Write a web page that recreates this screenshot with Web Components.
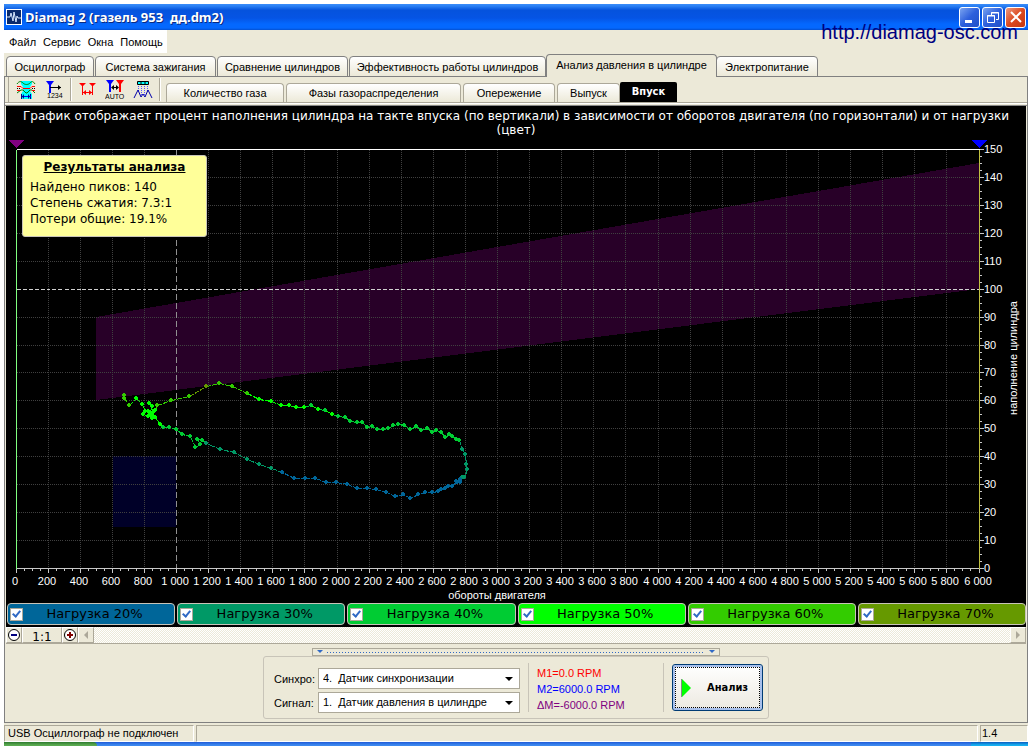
<!DOCTYPE html>
<html lang="ru">
<head>
<meta charset="utf-8">
<title>Diamag 2</title>
<style>
html, body { margin: 0; min-height: 100vh; background: #fff; }
body { font: 11px/14px "Liberation Sans", Arial, sans-serif; color: #000; }
</style>
</head>
<body>
<diamag-window></diamag-window>

<template id="diamag-window">
<style>
:host { display: flex; flex-direction: column; min-height: 100vh; box-sizing: border-box; padding: 4px 4px 0; position: relative;
  --face: #ece9d8; --shade: #aca899; --frame: #808080; }
.body { flex: 1; display: flex; flex-direction: column; background: var(--face); }
.page { flex: 1; display: flex; flex-direction: column; border: 1px solid var(--frame); border-top: 0; }
.link { position: absolute; right: 14px; top: 20px; font-size: 20px; line-height: 24px; color: #000080; text-decoration: none; }
.tools { display: flex; align-items: flex-end; height: 26px; box-sizing: border-box; border-bottom: 1px solid var(--shade); padding-left: 3px; }
.strip { height: 3px; box-sizing: border-box; border-top: 1px solid #fff; border-bottom: 1px solid #888; }
intake-chart { flex: 1 1 0; min-height: 360px; }
</style>
<title-bar>Diamag 2 (газель 953&nbsp; дд.dm2)</title-bar>
<a class="link" href="#">http://diamag-osc.com</a>
<div class="body">
  <menu-bar></menu-bar>
  <main-tabs></main-tabs>
  <div class="page">
    <div class="tools"><tool-icons></tool-icons><sub-tabs></sub-tabs></div>
    <div class="strip"></div>
    <intake-chart>График отображает процент наполнения цилиндра на такте впуска (по вертикали) в зависимости от оборотов двигателя (по горизонтали) и от нагрузки (цвет)</intake-chart>
    <load-legend></load-legend>
    <zoom-scroll></zoom-scroll>
    <analysis-panel></analysis-panel>
  </div>
  <status-bar></status-bar>
</div>
<task-edge></task-edge>
</template>

<template id="title-bar">
<style>
:host { display: flex; align-items: center; height: 26px; padding: 0 2px; color: #fff; font: bold 13px/18px "Noto Sans", sans-serif; text-shadow: 1px 1px #0a2a80;
  background: linear-gradient(#3b8cf8 0, #2a80f4 2px, #0553dd 6px, #0554e4 14px, #0468fe 20px, #0468fe 24px, #0450d0 26px); }
.name { flex: 1; white-space: nowrap; padding-left: 3px; }
.logo { display: block; }
button { width: 21px; height: 21px; margin: 0 0 0 2px; padding: 0; border: 1px solid #fff; border-radius: 3px; background: linear-gradient(135deg, #7ba4f0, #2d5fdc 50%, #2050c8); display: grid; place-items: center; }
button.close { background: linear-gradient(135deg, #ee9a80, #dc4a20 50%, #c43810); }
svg { display: block; }
</style>
<svg class="logo" width="16" height="16"><rect x=".5" y=".5" width="15" height="15" fill="#0a2a6c" stroke="#fff"/><path d="M1 8h3l1-4 2 8 1-9 2 10 1-6 1 2h3" fill="none" stroke="#d8e8ff"/></svg>
<span class="name"><slot></slot></span>
<button aria-label="Свернуть"><svg width="16" height="16"><path d="M3 11h7v3H3z" fill="#fff"/></svg></button>
<button aria-label="Восстановить"><svg width="16" height="16" fill="none" stroke="#fff"><path d="M6.500 6V3.500h7v7H11M6 4h8"/><path d="M2.500 6.500h7v7h-7zM2 7h8"/></svg></button>
<button class="close" aria-label="Закрыть"><svg width="16" height="16"><path d="M3 3l10 10M13 3L3 13" stroke="#fff" stroke-width="2"/></svg></button>
</template>

<template id="menu-bar">
<style>
:host { display: flex; height: 23px; }
nav { background: #fff; display: flex; align-items: center; gap: 7px; padding: 0 4px 0 5px; }
button { border: 0; padding: 0; background: none; font: inherit; color: inherit; }
</style>
<nav><button>Файл</button><button>Сервис</button><button>Окна</button><button>Помощь</button></nav>
</template>

<template id="main-tabs">
<style>
:host { display: flex; align-items: flex-end; height: 24px; box-sizing: border-box; padding-left: 2px; box-shadow: inset 0 -1px #808080; }
button { flex: none; height: 21px; margin: 0 1px 0 0; padding: 0; border: 1px solid #808080; border-radius: 4px 4px 0 0; background: linear-gradient(#fff, #ece9d8); font: inherit; color: inherit; white-space: nowrap; }
button.on { height: 23px; margin: 0 -1px; padding-bottom: 2px; border-bottom: 0; background: #ece9d8; }
.a { width: 88px } .b { width: 121px } .c { width: 131px } .d { width: 197px } .e { width: 171px } .f { width: 102px }
</style>
<button class="a">Осциллограф</button><button class="b">Система зажигания</button><button class="c">Сравнение цилиндров</button><button class="d">Эффективность работы цилиндров</button><button class="e on">Анализ давления в цилиндре</button><button class="f">Электропитание</button>
</template>

<template id="sub-tabs">
<style>
:host { display: flex; align-items: flex-end; padding-left: 2px; }
button { flex: none; height: 19px; margin: 0 2px 0 0; padding: 0; border: 1px solid #aca899; border-bottom: 0; border-radius: 4px 4px 0 0; background: linear-gradient(#fff, #ece9d8); font: inherit; color: inherit; white-space: nowrap; }
button.on { height: 20px; margin-left: -2px; border: 0; border-radius: 2px 2px 0 0; background: #000; color: #fff; font: bold 11px/14px "DejaVu Sans Condensed", sans-serif; }
.a { width: 118px } .b { width: 175px } .c { width: 92px } .d { width: 63px } .e { width: 57px }
</style>
<button class="a">Количество газа</button><button class="b">Фазы газораспределения</button><button class="c">Опережение</button><button class="d">Выпуск</button><button class="e on">Впуск</button>
</template>

<template id="tool-icons">
<style>
:host { display: flex; align-items: center; height: 25px; border-left: 1px solid #aca899; }
button { border: 0; padding: 0; margin: 0 4px 0 0; background: none; width: 24px; height: 22px; }
i { width: 1px; height: 23px; background: #aca899; border-right: 1px solid #fff; margin-right: 3px; }
svg { display: block; margin: auto; }
text { font: 7px "Liberation Sans", sans-serif; }
.first { margin-left: 5px; }
</style>
<button class="first" aria-label="Осциллограмма"><svg width="20" height="20" fill="none"><path d="M5 1h11v3l-2 3v4l2 3v5H5v-5l2-3V7L5 4z" fill="#0ff"/><path d="M1 4c2-3 4-3 6-1s5 2 7 0 3-2 5 1M1 13l4-3h2l3 3h1l3-3h2l3 3" stroke="#008000"/><path d="M1 6.500h4l2 2h7l2-2h3M1 10.500h3M16 10.500h3" stroke="#f00"/><path d="M1 8.500h4M16 8.500h3" stroke="#000" stroke-dasharray="1 1"/><path d="M5.500 14v5M14.500 14v5" stroke="#008"/><path d="M6 16.500h9" stroke="#00f"/><path d="M8 14v5l-2-2.500zM12 14v5l2-2.500z" fill="#008"/></svg></button>
<button aria-label="Нумерация"><svg width="20" height="20"><path d="M2 1h8L7 5v8H5V5z" fill="#00f"/><path d="M6 7.500h11" stroke="#000"/><path d="M14 5l3 2.500-3 2.500z"/><text x="3" y="18">1234</text></svg></button>
<i></i>
<button aria-label="Маркеры"><svg width="20" height="20" fill="#f00"><path d="M2 3h7L6 6v9H5V6zM12 3h7l-3 3v9h-1V6z"/><path d="M5 12h11v1H5z"/><path d="M9 10v5l-3-2.500zM12 10v5l3-2.500z"/></svg></button>
<button aria-label="Авто"><svg width="20" height="20"><path d="M1 0h8L6 4v8H4V4z" fill="#00f"/><path d="M11 0h8l-3 4v8h-2V4z" fill="#f00"/><path d="M7 7.500h6" stroke="#000"/><path d="M9 5v5L6 7.500zM11 5v5l3-2.500z"/><text x="0" y="19">AUTO</text></svg></button>
<button aria-label="Пики"><svg width="20" height="20" fill="none"><path d="M4.500 1.500h11v3h-11z" fill="#0ff" stroke="#000"/><path d="M8 1v4M12 1v4" stroke="#000"/><path d="M5.500 6v5M8.500 6v9M11.500 6v9M14.500 6v5" stroke="#55f" stroke-dasharray="1 1"/><path d="M1 18l4-8 3 7 2-3 2 3 3-7 4 8" stroke="#00a"/></svg></button>
<i></i>
</template>

<template id="intake-chart">
<style>
:host { display: flex; flex-direction: column; background: #000; color: #fff; position: relative; margin-right: 1px; margin-left: 1px; }
p { margin: 0; padding: 3px 0 0; text-align: center; font: 12px/14px "DejaVu Sans", Verdana, sans-serif; }
.plot { flex: 1 1 0; min-height: 0; overflow: hidden; }
svg { display: block; }
text { fill: #fff; font: 11px "Liberation Sans", Arial, sans-serif; }
results-note { position: absolute; left: 16px; top: 49px; }
</style>
<p><slot></slot></p>
<div class="plot"></div>
<results-note></results-note>
</template>

<template id="results-note">
<style>
:host { display: block; box-sizing: border-box; width: 185px; padding: 3px 7px 9px; border: 1px solid #c8c4b8; border-radius: 3px; background: #ffff99; color: #000; font: 12px/16px "DejaVu Sans", Verdana, sans-serif; }
h2 { margin: 0 0 4px; font-size: 12px; line-height: 16px; text-align: center; text-decoration: underline; }
</style>
<h2>Результаты анализа</h2>
<div>Найдено пиков: 140</div>
<div>Степень сжатия: 7.3:1</div>
<div>Потери общие: 19.1%</div>
</template>

<template id="load-legend">
<style>:host { display: flex; gap: 2px; padding: 2px 0 2px 1px; margin: 0 1px; background: #000; }</style>
<load-item style="--c:#006699">Нагрузка 20%</load-item><load-item style="--c:#009966">Нагрузка 30%</load-item><load-item style="--c:#00cc33">Нагрузка 40%</load-item><load-item style="--c:#00ff00">Нагрузка 50%</load-item><load-item style="--c:#33cc00">Нагрузка 60%</load-item><load-item style="--c:#669900">Нагрузка 70%</load-item>
</template>

<template id="load-item">
<style>
:host { flex: 1; display: block; border: 1px solid #c8c4b8; border-radius: 4px; background: var(--c); color: #000; font: 13px/20px "DejaVu Sans", Verdana, sans-serif; }
label { display: flex; align-items: center; padding: 0 8px 0 2px; }
input { appearance: none; box-sizing: border-box; width: 13px; height: 13px; margin: 0; border: 1px solid #aca899; background: #fff; display: grid; }
input:checked::before { content: ""; width: 3px; height: 6px; margin: 0 0 1px 3px; border: solid #316ac5; border-width: 0 2px 2px 0; transform: rotate(40deg); }
span { flex: 1; text-align: center; white-space: nowrap; }
</style>
<label><input type="checkbox" checked><span><slot></slot></span></label>
</template>

<template id="zoom-scroll">
<style>
:host { display: flex; height: 17px; box-sizing: border-box; border-bottom: 1px solid #aca899; margin: 0 1px; }
button { box-sizing: border-box; width: 16px; height: 16px; padding: 0; border: 1px solid; border-color: #fff #aca899 #aca899 #fff; background: #ece9d8; display: grid; place-items: center; color: #000; }
.one { width: 40px; font: 12px/14px "DejaVu Sans", Verdana, sans-serif; padding-top: 2px; }
.track { flex: 1; background: repeating-conic-gradient(#fff 0 25%, #ece9d8 0 50%) 0 0 / 2px 2px; }
svg { display: block; }
</style>
<button aria-label="Уменьшить"><svg width="14" height="14"><circle cx="7" cy="7" r="5.500" fill="#fff" stroke="#000"/><path d="M4 7h6" stroke="#000080" stroke-width="2"/></svg></button>
<button class="one">1:1</button>
<button aria-label="Увеличить"><svg width="14" height="14"><circle cx="7" cy="7" r="5.500" fill="#fff" stroke="#000"/><path d="M4 7h6M7 4v6" stroke="#800000" stroke-width="2"/></svg></button>
<button aria-label="Влево"><svg width="14" height="14"><path d="M9 3v8L5 7z" fill="#aca899"/></svg></button>
<div class="track"></div>
<button aria-label="Вправо"><svg width="14" height="14"><path d="M5 3v8l4-4z" fill="#aca899"/></svg></button>
</template>

<template id="analysis-panel">
<style>
:host { display: flex; flex-direction: column; align-items: center; padding: 4px 0 3px; }
.grip { width: 408px; height: 8px; box-sizing: border-box; border: 1px solid #aca899; display: flex; align-items: center; gap: 4px; padding: 0 4px; }
.grip u { flex: 1; height: 1px; background: repeating-linear-gradient(90deg, #316ac5 0 1px, transparent 1px 3px); }
.grip svg { display: block; }
.group { width: 506px; height: 63px; box-sizing: border-box; border: 1px solid #c8c4b8; border-radius: 3px; display: flex; align-items: center; padding: 0 5px 0 10px; }
.fields { display: grid; grid-template-columns: 44px 202px; row-gap: 3px; align-items: center; margin-top: 6px; }
.pick { display: grid; align-items: center; }
.pick > * { grid-area: 1 / 1; }
select { appearance: none; box-sizing: border-box; width: 100%; height: 21px; padding: 0 20px 1px 4px; margin: 0; border: 1px solid #aca899; border-radius: 0; background: #fff; font: inherit; color: inherit; }
.pick svg { justify-self: end; margin-right: 7px; pointer-events: none; }
.bar { width: 1px; height: 49px; background: #c8c4b8; margin: 0 8px; }
.marks { width: 118px; line-height: 16px; white-space: nowrap; padding-top: 2px; }
.run { box-sizing: border-box; width: 91px; height: 47px; margin: 0; padding: 0 0 0 7px; border: 1px solid #003c74; border-radius: 3px; box-shadow: inset 0 0 0 2px #a8c0ec; outline: 1px dotted #000; outline-offset: -4px; background: linear-gradient(#fff, #ece9e0); display: flex; align-items: center; gap: 15px; font: bold 11px/14px "DejaVu Sans Condensed", sans-serif; color: #000; }
</style>
<div class="grip"><svg width="6" height="4"><path d="M0 0h6L3 3z" fill="#316ac5"/></svg><u></u><svg width="6" height="4"><path d="M0 0h6L3 3z" fill="#316ac5"/></svg></div>
<div class="group">
  <div class="fields">
    <label for="sync">Синхро:</label><div class="pick"><select id="sync"><option>4.&nbsp; Датчик синхронизации</option></select><svg width="8" height="4"><path d="M0 0h8L4 4z"/></svg></div>
    <label for="signal">Сигнал:</label><div class="pick"><select id="signal"><option>1.&nbsp; Датчик давления в цилиндре</option></select><svg width="8" height="4"><path d="M0 0h8L4 4z"/></svg></div>
  </div>
  <div class="bar"></div>
  <div class="marks"><div style="color:#f00">M1=0.0 RPM</div><div style="color:#00f">M2=6000.0 RPM</div><div style="color:#800080">ΔM=-6000.0 RPM</div></div>
  <div class="bar"></div>
  <button class="run"><svg width="12" height="20"><path d="M2 1v18l9-9z" fill="#0f0"/><path d="M1.500 1v18" stroke="#888"/></svg>Анализ</button>
</div>
</template>

<template id="status-bar">
<style>
:host { display: flex; gap: 2px; padding: 2px 0 0; background: #ece9d8; }
div { box-sizing: border-box; height: 17px; padding: 0 3px; border: 1px solid; border-color: #aca899 #fff #fff #aca899; white-space: nowrap; }
.a { width: 190px } .b { flex: 1 } .c { width: 48px; padding: 0 1px }
</style>
<div class="a">USB Осциллограф не подключен</div><div class="b"></div><div class="c">1.4</div>
</template>

<template id="task-edge">
<style>
:host { display: flex; height: 4px; background: linear-gradient(#1f5bd8, #3d88ee 3px); }
.start { width: 93px; background: linear-gradient(#2f7a2f, #5aaa50 3px); border-radius: 0 4px 0 0; }
.tray { width: 57px; margin-left: auto; background: linear-gradient(#0c5cc0, #16b0f0 3px); }
</style>
<div class="start"></div><div class="tray"></div>
</template>

<script>
class Part extends HTMLElement {
  constructor() {
    super();
    const tpl = document.getElementById(this.localName);
    this.attachShadow({ mode: 'open' }).append(tpl.content.cloneNode(true));
  }
}

// Measured cycle: colour runs of [x, y] points on a 963 x 419 field whose corner is 16, 149.
const FIELD = { x: 16, y: 149, w: 963, h: 419 };
const RUNS = [
  ['#33cc00', '124,395 124,398 129,405'],
  ['#00ff00', '136,398 142,404 145,411 143,414 148,416 152,406 149,403 153,412 148,411 152,418 149,415 155,410'],
  ['#33cc00', '157,405 171,400 189,396'],
  ['#669900', '206,386'],
  ['#33cc00', '219,383 232,386 247,393'],
  ['#00ff00', '259,399 271,401 281,405 289,405 296,407 304,407'],
  ['#00cc33', '311,405'],
  ['#00ff00', '318,409'],
  ['#00cc33', '325,410'],
  ['#00ff00', '332,414'],
  ['#00cc33', '338,416 345,417 350,421 357,422 362,422 367,427 372,426 377,429 383,429 388,428 393,425 398,424 404,425 410,429 416,426 421,430 427,428 432,432 436,430 441,432 445,437 449,434 452,436 456,439 459,440'],
  ['#009966', '462,449 465,454 466,464 467,469 464,477 462,477'],
  ['#006699', '460,482 457,482 460,479 456,481 452,486 448,486 445,488 441,489 438,491 432,492 425,492 418,494 410,498 403,494 395,496 386,492 376,489 367,488 357,488 347,484 336,482 326,482 315,478 305,478 294,478 282,472'],
  ['#009966', '271,468 259,464 247,459 234,452 220,449 206,443'],
  ['#00cc33', '202,440 197,439 200,444 195,447 190,436 182,434 176,429 169,427 163,427'],
  ['#00ff00', '160,424 155,417 152,414']
];

class IntakeChart extends Part {
  connectedCallback() {
    this.plot = this.shadowRoot.querySelector('.plot');
    this.draw();
    new ResizeObserver(() => this.draw()).observe(this.plot);
  }
  draw() {
    const W = this.plot.clientWidth, H = this.plot.clientHeight;
    if (!W || !H || (W === this.w && H === this.h)) return;
    this.w = W; this.h = H;
    const L = 10, T = 12, R = W - 47, B = H - 33;
    const X = v => Math.floor(L + v / 6000 * (R - L)), Y = v => Math.round(B - v / 150 * (B - T));
    const line = (x1, y1, x2, y2, c, extra = '') => `<path d="M${x1} ${y1}L${x2} ${y2}" transform="translate(.5 .5)" stroke="${c}" ${extra}/>`;
    let s = `<path d="M${X(500)} ${Y(60)}V${Y(90)}L${R} ${Y(145)}V${Y(100)}Z" fill="#280028"/>`;
    s += `<path d="M${X(600) + 1} ${Y(40)}H${X(1000)}V${Y(15) + 1}H${X(600) + 1}Z" fill="#000028"/>`;
    for (let v = 200; v < 6000; v += 200) s += v === 1000 ? '' : line(X(v), T, X(v), B, '#404040', 'stroke-dasharray="1 1"');
    for (let v = 10; v < 150; v += 10) s += v === 100 ? '' : line(L, Y(v), R, Y(v), '#404040', 'stroke-dasharray="1 1"');
    s += line(X(1000), T, X(1000), B, '#909090', 'stroke-dasharray="6 3"');
    s += line(L, Y(100), R, Y(100), '#d0d0d0', 'stroke-dasharray="4 2"');
    s += line(L, T, R, T, '#fff') + line(L, T, L, B, '#80ff80') + line(L, B, R + 4, B, '#c8c8c8') + line(R, T, R, B, '#c0c040');
    for (let v = 0; v <= 6000; v += 50) s += line(X(v), B, X(v), B + (v % 200 ? 2 : 4), '#c8c8c8');
    for (let v = 0; v <= 150; v += 2.5) s += line(R, Y(v), R + (v % 10 ? 2 : 4), Y(v), '#c8c8c8');
    for (let v = 0; v <= 6000; v += 200) s += `<text x="${X(v) - 1}" y="${B + 17}" text-anchor="middle">${v < 1000 ? v : Math.floor(v / 1000) + ' ' + String(v % 1000).padStart(3, '0')}</text>`;
    for (let v = 0; v <= 150; v += 10) s += `<text x="${R + 5}" y="${Y(v) + 4}">${v}</text>`;
    s += `<text x="${(L + R) / 2 | 0}" y="${B + 31}" text-anchor="middle">обороты двигателя</text>`;
    s += `<text transform="translate(${R + 38} ${(T + B) / 2 | 0}) rotate(-90)" text-anchor="middle">наполнение цилиндра</text>`;
    s += `<path d="M${L - 8} ${T - 9}h16l-8 8z" fill="#800080"/><path d="M${R - 8} ${T - 9}h16l-8 8z" fill="#00f"/>`;
    let prev = null, dots = '';
    for (const [c, list] of RUNS) {
      for (const p of list.split(' ')) {
        const [px, py] = p.split(',').map(Number);
        const x = Math.round(L + (px - FIELD.x) / FIELD.w * (R - L)), y = Math.round(T + (py - FIELD.y) / FIELD.h * (B - T));
        if (prev) s += line(prev[0], prev[1], x, y, c, 'stroke-dasharray="5 1"');
        dots += `<path d="M${x - 1} ${y - 2}h2v1h1v2h-1v1h-2v-1h-1v-2h1z" fill="${c}"/>`;
        prev = [x, y];
      }
    }
    this.plot.innerHTML = `<svg width="${W}" height="${H}" fill="none" shape-rendering="crispEdges" role="img">${s}${dots}</svg>`;
  }
}

for (const name of ['title-bar', 'menu-bar', 'main-tabs', 'sub-tabs', 'tool-icons', 'results-note', 'load-item', 'load-legend', 'zoom-scroll', 'analysis-panel', 'status-bar', 'task-edge'])
  customElements.define(name, class extends Part {});
customElements.define('intake-chart', IntakeChart);
customElements.define('diamag-window', class extends Part {});
</script>
</body>
</html>
